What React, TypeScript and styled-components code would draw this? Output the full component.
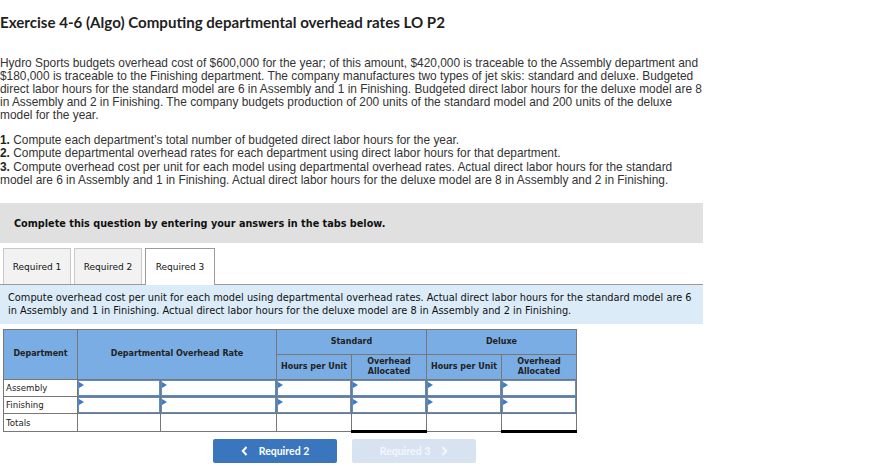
import React from 'react';
import styled, { createGlobalStyle, css } from 'styled-components';

const GlobalStyle = createGlobalStyle`
  body {
    margin: 0;
    background: #fff;
    font-family: 'Liberation Sans', Arial, sans-serif;
    color: #333;
  }
`;

const Page = styled.div`
  width: 883px;
  padding-top: 11.5px;
`;

const Title = styled.h1`
  margin: 0;
  font-family: Lato, sans-serif;
  font-size: 15.1px;
  font-weight: 700;
  color: #1f1f1f;
  line-height: 20px;
  white-space: nowrap;
`;

const Para = styled.p`
  margin: 25.5px 0 0;
  font-size: 11.9px;
  line-height: 12.9px;
  white-space: nowrap;
  color: #333;
`;

const List = styled.div`
  margin-top: 12px;
  font-size: 11.9px;
  line-height: 13.6px;
  white-space: nowrap;
  color: #333;
  b {
    font-weight: 700;
    color: #222;
  }
`;

const Banner = styled.div`
  margin-top: 15.5px;
  width: 703px;
  height: 40px;
  background: #e0e0e0;
  display: flex;
  align-items: center;
  padding-left: 14px;
  box-sizing: border-box;
  font-family: 'DejaVu Sans', Verdana, sans-serif;
  font-size: 9.7px;
  font-weight: 700;
  color: #111;
`;

const Tabs = styled.div`
  display: flex;
  gap: 3px;
  margin-top: 5px;
  padding-left: 3px;
  height: 36px;
`;

const Tab = styled.div<{ active?: boolean }>`
  width: 68px;
  box-sizing: border-box;
  border: 1px solid #c9c9c9;
  border-bottom: none;
  background: #f2f2f2;
  display: flex;
  align-items: center;
  justify-content: center;
  font-family: 'DejaVu Sans', Verdana, sans-serif;
  font-size: 9px;
  color: #111;
  ${p =>
    p.active &&
    css`
      width: 70px;
      background: #fff;
      border-color: #9a9a9a;
      position: relative;
      z-index: 1;
      margin-bottom: -1px;
    `}
`;

const Instructions = styled.div`
  width: 703px;
  box-sizing: border-box;
  border-top: 1px solid #9a9a9a;
  background: #dbebf8;
  padding: 7px 8px 6px;
  font-family: 'DejaVu Sans', Verdana, sans-serif;
  font-size: 9.8px;
  line-height: 12.8px;
  white-space: nowrap;
  color: #111;
`;

const Table = styled.table`
  margin: 5px 0 0 3px;
  border-collapse: collapse;
  table-layout: fixed;
  font-family: 'DejaVu Sans', Verdana, sans-serif;
  color: #222;
`;

const Th = styled.th<{ h?: number }>`
  background: #79ade4;
  border: 1px solid #777;
  font-size: 8px;
  font-weight: 700;
  line-height: 10.5px;
  height: ${p => p.h ?? 24}px;
  padding: 0;
  text-align: center;
  white-space: nowrap;
  color: #222;
`;

const Td = styled.td<{ total?: boolean }>`
  border: 1px solid #777;
  height: 16px;
  padding: 0;
  font-size: 8.6px;
  color: #222;
  ${p =>
    p.total &&
    css`
      border-top: 1px solid #000;
      border-bottom: 3px solid #000;
    `}
`;

const Label = styled.span`
  padding-left: 2px;
`;

const InputBox = styled.div`
  position: relative;
  height: 14px;
  border: 1px solid #5d8cc6;
  background: #fff;
  &::before {
    content: '';
    position: absolute;
    left: 0;
    top: 1px;
    border-left: 5px solid #3b7bc8;
    border-top: 3px solid transparent;
    border-bottom: 3px solid transparent;
  }
`;

const Nav = styled.div`
  display: flex;
  gap: 15px;
  margin: 6px 0 0 213px;
`;

const NavButton = styled.div<{ disabled?: boolean }>`
  width: 124px;
  height: 24px;
  border-radius: 2px;
  background: ${p => (p.disabled ? '#d8e3f1' : '#3a76bd')};
  color: ${p => (p.disabled ? '#f3f7fc' : '#fff')};
  display: flex;
  align-items: center;
  justify-content: center;
  gap: 11px;
  font-family: Lato, sans-serif;
  font-size: 10.5px;
  font-weight: 700;
`;

const Chevron = ({ dir }: { dir: 'left' | 'right' }) => (
  <svg width="7" height="10" viewBox="0 0 7 10">
    <path
      d={dir === 'left' ? 'M5.5 1 L1.8 5 L5.5 9' : 'M1.5 1 L5.2 5 L1.5 9'}
      fill="none"
      stroke="currentColor"
      strokeWidth="2"
    />
  </svg>
);

const rows = ['Assembly', 'Finishing'];

export default function App() {
  return (
    <Page>
      <GlobalStyle />
      <Title>Exercise 4-6 (Algo) Computing departmental overhead rates LO P2</Title>
      <Para>
        Hydro Sports budgets overhead cost of $600,000 for the year; of this amount, $420,000 is traceable to the Assembly department and
        <br />
        $180,000 is traceable to the Finishing department. The company manufactures two types of jet skis: standard and deluxe. Budgeted
        <br />
        direct labor hours for the standard model are 6 in Assembly and 1 in Finishing. Budgeted direct labor hours for the deluxe model are 8
        <br />
        in Assembly and 2 in Finishing. The company budgets production of 200 units of the standard model and 200 units of the deluxe
        <br />
        model for the year.
      </Para>
      <List>
        <b>1.</b> Compute each department’s total number of budgeted direct labor hours for the year.
        <br />
        <b>2.</b> Compute departmental overhead rates for each department using direct labor hours for that department.
        <br />
        <b>3.</b> Compute overhead cost per unit for each model using departmental overhead rates. Actual direct labor hours for the standard
        <br />
        model are 6 in Assembly and 1 in Finishing. Actual direct labor hours for the deluxe model are 8 in Assembly and 2 in Finishing.
      </List>
      <Banner>Complete this question by entering your answers in the tabs below.</Banner>
      <Tabs>
        <Tab>Required 1</Tab>
        <Tab>Required 2</Tab>
        <Tab active>Required 3</Tab>
      </Tabs>
      <Instructions>
        Compute overhead cost per unit for each model using departmental overhead rates. Actual direct labor hours for the standard model are 6
        <br />
        in Assembly and 1 in Finishing. Actual direct labor hours for the deluxe model are 8 in Assembly and 2 in Finishing.
      </Instructions>
      <Table>
        <colgroup>
          <col style={{ width: 74 }} />
          <col style={{ width: 83 }} />
          <col style={{ width: 116 }} />
          <col style={{ width: 75 }} />
          <col style={{ width: 75 }} />
          <col style={{ width: 75 }} />
          <col style={{ width: 75 }} />
        </colgroup>
        <thead>
          <tr>
            <Th rowSpan={2}>Department</Th>
            <Th rowSpan={2} colSpan={2}>Departmental Overhead Rate</Th>
            <Th colSpan={2}>Standard</Th>
            <Th colSpan={2}>Deluxe</Th>
          </tr>
          <tr>
            <Th>Hours per Unit</Th>
            <Th>Overhead<br />Allocated</Th>
            <Th>Hours per Unit</Th>
            <Th>Overhead<br />Allocated</Th>
          </tr>
        </thead>
        <tbody>
          {rows.map(r => (
            <tr key={r}>
              <Td><Label>{r}</Label></Td>
              {[0, 1, 2, 3, 4, 5].map(i => (
                <Td key={i}><InputBox /></Td>
              ))}
            </tr>
          ))}
          <tr>
            <Td><Label>Totals</Label></Td>
            <Td />
            <Td />
            <Td />
            <Td total />
            <Td />
            <Td total />
          </tr>
        </tbody>
      </Table>
      <Nav>
        <NavButton>
          <Chevron dir="left" />
          Required 2
        </NavButton>
        <NavButton disabled>
          Required 3
          <Chevron dir="right" />
        </NavButton>
      </Nav>
    </Page>
  );
}
